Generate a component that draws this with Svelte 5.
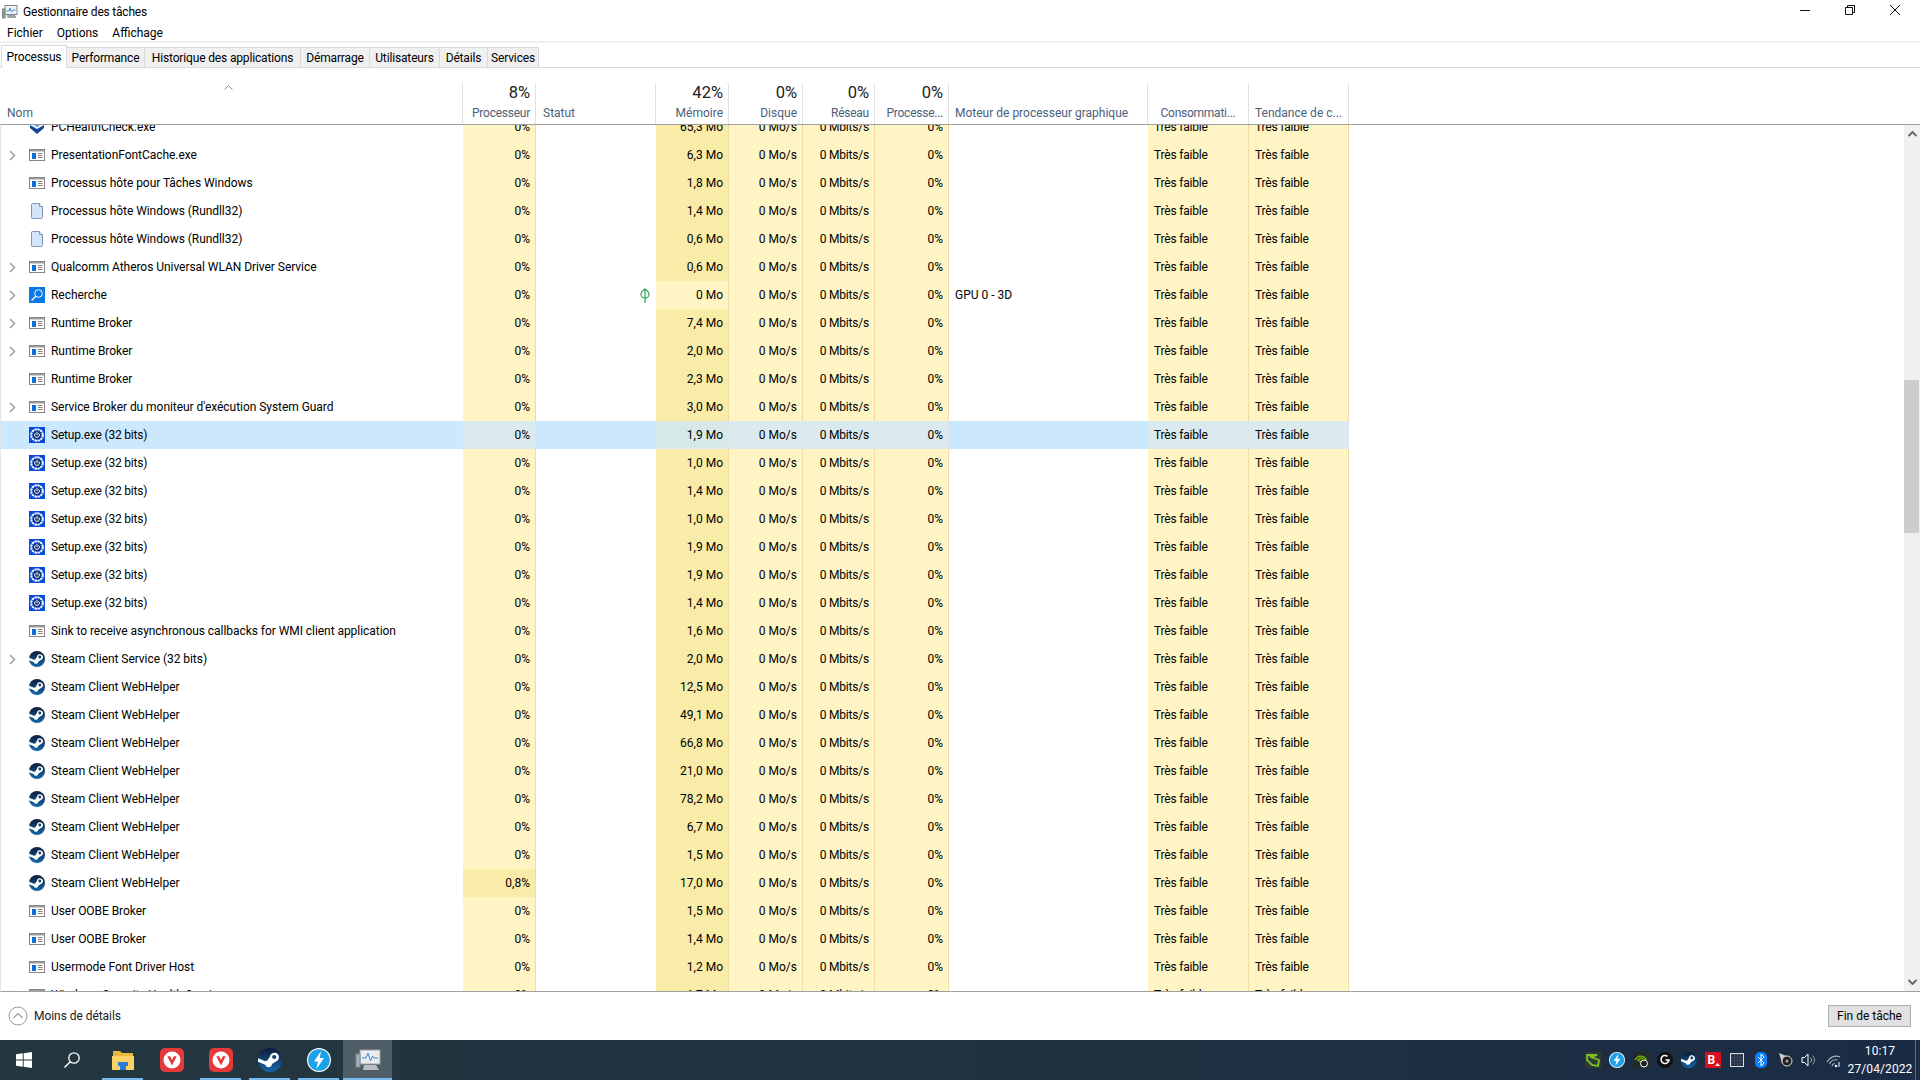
<script>
  const tabs = [
    { label: 'Processus', w: 66 },
    { label: 'Performance', w: 78 },
    { label: 'Historique des applications', w: 156 },
    { label: 'Démarrage', w: 69 },
    { label: 'Utilisateurs', w: 70 },
    { label: 'Détails', w: 48 },
    { label: 'Services', w: 51 },
  ]
  const menus = ['Fichier', 'Options', 'Affichage']

  const row = (name, mem, icon = 'win', exp = false, extra = {}) => ({ name, mem, icon, exp, cpu: '0%', ...extra })

  const rows = [
    row('PCHealthCheck.exe', '65,3 Mo', 'health'),
    row('PresentationFontCache.exe', '6,3 Mo', 'win', true),
    row('Processus hôte pour Tâches Windows', '1,8 Mo'),
    row('Processus hôte Windows (Rundll32)', '1,4 Mo', 'doc'),
    row('Processus hôte Windows (Rundll32)', '0,6 Mo', 'doc'),
    row('Qualcomm Atheros Universal WLAN Driver Service', '0,6 Mo', 'win', true),
    row('Recherche', '0 Mo', 'search', true, { gpu: 'GPU 0 - 3D', leaf: true, memLight: true }),
    row('Runtime Broker', '7,4 Mo', 'win', true),
    row('Runtime Broker', '2,0 Mo', 'win', true),
    row('Runtime Broker', '2,3 Mo'),
    row("Service Broker du moniteur d'exécution System Guard", '3,0 Mo', 'win', true),
    row('Setup.exe (32 bits)', '1,9 Mo', 'setup', false, { selected: true }),
    row('Setup.exe (32 bits)', '1,0 Mo', 'setup'),
    row('Setup.exe (32 bits)', '1,4 Mo', 'setup'),
    row('Setup.exe (32 bits)', '1,0 Mo', 'setup'),
    row('Setup.exe (32 bits)', '1,9 Mo', 'setup'),
    row('Setup.exe (32 bits)', '1,9 Mo', 'setup'),
    row('Setup.exe (32 bits)', '1,4 Mo', 'setup'),
    row('Sink to receive asynchronous callbacks for WMI client application', '1,6 Mo'),
    row('Steam Client Service (32 bits)', '2,0 Mo', 'steam', true),
    row('Steam Client WebHelper', '12,5 Mo', 'steam'),
    row('Steam Client WebHelper', '49,1 Mo', 'steam'),
    row('Steam Client WebHelper', '66,8 Mo', 'steam'),
    row('Steam Client WebHelper', '21,0 Mo', 'steam'),
    row('Steam Client WebHelper', '78,2 Mo', 'steam'),
    row('Steam Client WebHelper', '6,7 Mo', 'steam'),
    row('Steam Client WebHelper', '1,5 Mo', 'steam'),
    row('Steam Client WebHelper', '17,0 Mo', 'steam', false, { cpu: '0,8%', cpuHot: true }),
    row('User OOBE Broker', '1,5 Mo'),
    row('User OOBE Broker', '1,4 Mo'),
    row('Usermode Font Driver Host', '1,2 Mo'),
    row('Windows Security Health Service', '1,7 Mo', 'win', true),
  ]
</script>

{#snippet steamIcon(size)}
  <svg width={size} height={size} viewBox="0 0 16 16">
    <defs>
      <linearGradient id="steam-bg" x1="0" y1="0" x2="0" y2="1">
        <stop offset="0" stop-color="#0c1a3a" />
        <stop offset="1" stop-color="#1668a8" />
      </linearGradient>
    </defs>
    <circle cx="8" cy="8" r="8" fill="url(#steam-bg)" />
    <path d="M0 9.2 4.800 11.200A2.300 2.300 0 0 0 9.300 10.700L12 9A3 3 0 1 0 8 5.600L6.300 8.400A2.300 2.300 0 0 0 4.900 8.800L.1 6.800Z" fill="#fff" />
    <circle cx="10.800" cy="6" r="1.400" fill="#1a3a68" />
  </svg>
{/snippet}

{#snippet daemonIcon(size)}
  <svg width={size} height={size} viewBox="0 0 24 24">
    <circle cx="12" cy="12" r="12" fill="#fff" />
    <circle cx="12" cy="12" r="10.800" fill="#1ca0e8" />
    <path d="M14 3 7 13.500h4L9.500 21 17 10h-4.300Z" fill="#fff" />
  </svg>
{/snippet}

{#snippet vivaldiIcon()}
  <svg width="24" height="24" viewBox="0 0 24 24">
    <rect width="24" height="24" rx="5" fill="#e5383b" />
    <circle cx="12" cy="12" r="8.500" fill="#fff" />
    <path d="M7.300 8.300 12 17.500l4.700-9.200h-2.900L12 12 10.200 8.300Z" fill="#e5383b" />
  </svg>
{/snippet}

{#snippet rowIcon(kind)}
  {#if kind === 'win'}
    <svg width="16" height="16" viewBox="0 0 16 16">
      <rect x=".5" y="2.500" width="15" height="11" fill="#fff" stroke="#858585" />
      <rect x="1" y="3" width="14" height="1.500" fill="#a0a0a0" />
      <rect x="3" y="6" width="4" height="6" fill="#0a6fd6" />
      <path d="M9 6.500h4.500M9 8.500h4.500M9 10.500h4.500" stroke="#808080" />
    </svg>
  {:else if kind === 'doc'}
    <svg width="16" height="16" viewBox="0 0 16 16">
      <path d="M2.500 1.500Q2.500.5 3.500.5h7l3 3v11q0 1-1 1h-9q-1 0-1-1Z" fill="#d3e5f8" stroke="#7f96b8" />
      <path d="M10.500.5v3h3" fill="#f4f9ff" stroke="#7f96b8" />
    </svg>
  {:else if kind === 'setup'}
    <svg width="16" height="16" viewBox="0 0 16 16">
      <rect width="16" height="16" fill="#0a4ad8" />
      <circle cx="8" cy="8" r="5.800" fill="none" stroke="#f2f5ff" stroke-width="2" stroke-dasharray="2.400 .6" />
      <circle cx="8" cy="8" r="4" fill="#12306e" />
      <path d="M8 4.800v3.400M6.300 6.300A2.400 2.400 0 1 0 9.700 6.300" fill="none" stroke="#fff" />
    </svg>
  {:else if kind === 'steam'}
    {@render steamIcon(16)}
  {:else if kind === 'search'}
    <svg width="16" height="16" viewBox="0 0 16 16">
      <rect width="16" height="16" fill="#0a78e6" />
      <circle cx="9.500" cy="6.500" r="3.800" fill="none" stroke="#fff" />
      <path d="M6.800 9.200 2.600 13.400" stroke="#fff" stroke-width="1.400" />
    </svg>
  {:else if kind === 'health'}
    <svg width="16" height="16" viewBox="0 0 16 16">
      <path d="M8 0 15 4 8 8 1 4Z" fill="#5ea3e6" />
      <path d="M1 6 8 10 15 6 15 9 8 15 1 9Z" fill="#0f4a94" />
    </svg>
  {/if}
{/snippet}

<div class="window">
  <header class="title">
    <svg class="app-icon" width="16" height="16" viewBox="0 0 16 16">
      <rect x="3" y="1.500" width="12" height="9" fill="#eef3f8" stroke="#7d8790" />
      <path d="M4.500 7 7 7 8 4 9.500 8 11 6h2.500" fill="none" stroke="#3c8bd0" />
      <path d="M5 11h8l1.500 3h-9Z" fill="#9aa2a8" />
      <rect x=".5" y="5" width="2.500" height="9" fill="#7fae6a" stroke="#7d8790" />
    </svg>
    <span>Gestionnaire des tâches</span>
    <div class="caption">
      <svg width="10" height="10" viewBox="0 0 10 10"><path d="M0 5.500h10" stroke="#111" /></svg>
      <svg width="10" height="10" viewBox="0 0 10 10"><path d="M.5 2.500h7v7h-7ZM2.500 2.500v-2h7v7h-2" fill="none" stroke="#111" /></svg>
      <svg width="10" height="10" viewBox="0 0 10 10"><path d="M0 0 10 10M10 0 0 10" stroke="#111" /></svg>
    </div>
  </header>

  <nav class="menu">
    {#each menus as m}<span>{m}</span>{/each}
  </nav>

  <div class="tabs">
    {#each tabs as t, i}
      <div class="tab" class:active={i === 0} style="width: {t.w}px">{t.label}</div>
    {/each}
  </div>

  <div class="head">
    <div class="cell name">
      <svg class="sort" width="9" height="5" viewBox="0 0 9 5"><path d="M.5 4.500 4.500.7 8.500 4.500" fill="none" stroke="#8a8a8a" /></svg>
      <span class="label">Nom</span>
    </div>
    <div class="cell cpu r"><b>8%</b><span class="label tight">Processeur</span></div>
    <div class="cell status"><span class="label">Statut</span></div>
    <div class="cell mem r"><b>42%</b><span class="label">Mémoire</span></div>
    <div class="cell disk r"><b>0%</b><span class="label">Disque</span></div>
    <div class="cell net r"><b>0%</b><span class="label tight">Réseau</span></div>
    <div class="cell gpu r"><b>0%</b><span class="label tight">Processe...</span></div>
    <div class="cell engine"><span class="label">Moteur de processeur graphique</span></div>
    <div class="cell power center"><span class="label tight">Consommati...</span></div>
    <div class="cell trend center"><span class="label">Tendance de c...</span></div>
  </div>

  <div class="body">
    <div class="scroller">
      {#each rows as r}
        <div class="row" class:selected={r.selected}>
          <div class="cell name">
            <span class="chev">
              {#if r.exp}
                <svg width="7" height="11" viewBox="0 0 7 11"><path d="M1 1 5.500 5.500 1 10" fill="none" stroke="#a3a3a3" stroke-width="1.600" /></svg>
              {/if}
            </span>
            <span class="ico">{@render rowIcon(r.icon)}</span>
            <span class="txt" class:narrow={r.icon === 'setup'}>{r.name}</span>
          </div>
          <div class="cell cpu r heat" class:hot={r.cpuHot}>{r.cpu}</div>
          <div class="cell status">
            {#if r.leaf}
              <svg class="leaf" width="10" height="15" viewBox="0 0 10 15"><path d="M5 1C2 3 1 5 1 6.500 1 8.500 3 10 5 10S9 8.500 9 6.500C9 5 8 3 5 1ZM5 1V15" fill="none" stroke="#1d9a4a" stroke-width="1.100" /></svg>
            {/if}
          </div>
          <div class="cell mem r heat" class:hot={!r.memLight}>{r.mem}</div>
          <div class="cell disk r heat">0 Mo/s</div>
          <div class="cell net r heat">0 Mbits/s</div>
          <div class="cell gpu r heat">0%</div>
          <div class="cell engine">{r.gpu ?? ''}</div>
          <div class="cell power heat">Très faible</div>
          <div class="cell trend heat">Très faible</div>
        </div>
      {/each}
    </div>
    <div class="scrollbar">
      <svg width="9" height="6" viewBox="0 0 9 6"><path d="M.5 5 4.500 1 8.500 5" fill="none" stroke="#606060" stroke-width="1.800" /></svg>
      <div class="track"><div class="thumb"></div></div>
      <svg width="9" height="6" viewBox="0 0 9 6"><path d="M.5 1 4.500 5 8.500 1" fill="none" stroke="#606060" stroke-width="1.800" /></svg>
    </div>
  </div>

  <footer class="foot">
    <div class="less">
      <svg width="20" height="20" viewBox="0 0 20 20"><circle cx="10" cy="10" r="9" fill="none" stroke="#9a9a9a" /><path d="M5.500 12 10 7.500 14.500 12" fill="none" stroke="#9a9a9a" stroke-width="1.200" /></svg>
      <span>Moins de détails</span>
    </div>
    <button type="button">Fin de tâche</button>
  </footer>

  <div class="taskbar">
    <div class="tb start">
      <svg width="16" height="16" viewBox="0 0 16 16"><path d="M0 2.300 6.800 1.300V7.500H0ZM7.700 1.200 16 0V7.500H7.700ZM0 8.400H6.800V14.700L0 13.700ZM7.700 8.400H16V16L7.700 14.800Z" fill="#fff" /></svg>
    </div>
    <div class="tb find">
      <svg width="18" height="18" viewBox="0 0 18 18"><circle cx="11" cy="7" r="5.200" fill="none" stroke="#fff" stroke-width="1.300" /><path d="M7.200 10.800 1.500 16.500" stroke="#fff" stroke-width="1.500" /></svg>
    </div>
    <div class="tb on">
      <svg width="22" height="20" viewBox="0 0 22 20"><path d="M1 1h7l2 2h11v4H1Z" fill="#e9b93f" /><path d="M0 6h22v14H0Z" fill="#fad165" /><path d="M6 16V12h10v4h-2v4H8v-4Z" fill="#2b7bd1" /></svg>
    </div>
    <div class="tb">{@render vivaldiIcon()}</div>
    <div class="tb on">{@render vivaldiIcon()}</div>
    <div class="tb on">{@render steamIcon(24)}</div>
    <div class="tb on">{@render daemonIcon(24)}</div>
    <div class="tb on current">
      <svg width="26" height="24" viewBox="0 0 26 24"><rect x="5" y="2" width="20" height="14" fill="#e8ecef" stroke="#9aa1a6" /><path d="M7 10h4l2-5 2.500 8 2-5 1.500 2h4" fill="none" stroke="#3c8bd0" /><path d="M9 17h12l3 5H8Z" fill="#b9bec2" /><rect x="1" y="6" width="4" height="13" fill="#a9b0b5" stroke="#7d8790" /></svg>
    </div>

    <div class="tray">
      <svg width="16" height="16" viewBox="0 0 16 16"><rect width="16" height="16" fill="#2f3a35" /><path d="M2 3h10l-6 2 8 3-1 6-6-1-5-5Z" fill="none" stroke="#7dc21e" stroke-width="1.800" /></svg>
      {@render daemonIcon(16)}
      <svg width="16" height="16" viewBox="0 0 16 16"><rect width="16" height="16" fill="#232a2a" /><path d="M2 8C5 3 10 3 13 7 10 11 6 10 5 8 7 6 9 6 10 7" fill="none" stroke="#76b900" stroke-width="1.400" /><circle cx="11" cy="11.500" r="3.500" fill="#222" stroke="#fff" /></svg>
      <svg width="16" height="16" viewBox="0 0 16 16"><circle cx="8" cy="8" r="8" fill="#111" /><path d="M10.500 4.300A4 4 0 1 0 12 8H8.500" fill="none" stroke="#fff" stroke-width="1.600" /></svg>
      {@render steamIcon(16)}
      <svg width="16" height="16" viewBox="0 0 16 16"><rect width="16" height="16" rx="1" fill="#d4101c" /><text x="2.500" y="12" font-family="Roboto, sans-serif" font-weight="700" font-size="12" fill="#fff">B</text><path d="M10 14l2.500-3 2.500 3Z" fill="#fff" /></svg>
      <svg class="grid-ico" width="14" height="14" viewBox="0 0 14 14"><rect x=".5" y=".5" width="13" height="13" fill="#4a5460" stroke="#d8dde2" /><path d="M3 1v12M6 1v12M9 1v12M12 1v12M1 3h12M1 6h12M1 9h12M1 12h12" stroke="#1b2a44" /></svg>
      <svg class="bt-ico" width="12" height="16" viewBox="0 0 12 16"><rect width="12" height="16" rx="5" fill="#0a82ff" /><path d="M3 5l6 6-3 3V2l3 3-6 6" fill="none" stroke="#fff" /></svg>
      <svg width="16" height="16" viewBox="0 0 16 16"><path d="M2 1 12 5 12 13 5 11Z" fill="#ccc" /><circle cx="10" cy="9" r="5" fill="#222" stroke="#ddd" /><circle cx="10" cy="9" r="1.500" fill="#aaa" /></svg>
      <svg width="16" height="16" viewBox="0 0 16 16"><path d="M1 5.500h2.500L7 2v12L3.500 10.500H1Z" fill="none" stroke="#fff" /><path d="M9.500 5.500a3.500 3.500 0 0 1 0 5M11.500 3.500a6 6 0 0 1 0 9" fill="none" stroke="#9aa5b4" /></svg>
      <svg class="wifi" width="16" height="16" viewBox="0 0 16 16"><path d="M1 10A10 10 0 0 1 14 5M3.500 12A7 7 0 0 1 11.500 8M6 14A3.500 3.500 0 0 1 9 11.500" fill="none" stroke="#aab3be" stroke-width="1.200" /><circle cx="10" cy="14" r="1.200" fill="#fff" /><path d="M13 10v5" stroke="#fff" /></svg>
    </div>
    <div class="clock">
      <span>10:17</span>
      <span>27/04/2022</span>
    </div>
    <div class="peek"></div>
  </div>
</div>

<style>
  :global(body) {
    margin: 0;
    background: #fff;
  }

  .window {
    display: flex;
    flex-direction: column;
    width: 1920px;
    height: 1080px;
    overflow: hidden;
    font-family: Roboto, "Noto Sans", sans-serif;
    font-size: 12px;
    color: #000;
    background: #fff;
  }

  .title {
    display: flex;
    align-items: center;
    height: 23px;
    padding-left: 2px;
    flex: none;
    letter-spacing: -0.2px;
  }

  .app-icon {
    margin-right: 5px;
  }

  .caption {
    display: flex;
    gap: 35px;
    margin-left: auto;
    margin-top: -3px;
    padding-right: 20px;
  }

  .menu {
    display: flex;
    gap: 14px;
    height: 18px;
    padding: 1px 7px 0;
    box-sizing: border-box;
    align-items: center;
    flex: none;
  }

  .tabs {
    display: flex;
    align-items: flex-end;
    height: 24px;
    padding-left: 1px;
    flex: none;
    border-top: 2px solid #f0f0f0;
    border-bottom: 1px solid #d9d9d9;
    letter-spacing: -0.15px;
  }

  .tab {
    display: flex;
    align-items: center;
    justify-content: center;
    height: 20px;
    padding-top: 1px;
    background: #f0f0f0;
    border: 1px solid #d9d9d9;
    border-bottom: 0;
    border-left: 0;
    box-sizing: border-box;
  }

  .tab.active {
    height: 23px;
    margin-bottom: -1px;
    padding-top: 0;
    background: #fff;
    border-left: 1px solid #d9d9d9;
  }

  .head,
  .row {
    display: grid;
    grid-template-columns: 463px 73px 120px 73px 74px 72px 74px 199px 101px 100px;
    width: 1349px;
  }

  .row {
    grid-template-columns: 462px 73px 120px 73px 74px 72px 74px 199px 101px 100px;
    width: 1348px;
  }

  .head {
    height: 41px;
    margin-top: 15px;
    flex: none;
  }

  .head .cell {
    position: relative;
    display: flex;
    flex-direction: column;
    justify-content: flex-end;
    padding: 0 6px 4px;
    border-right: 1px solid #e0e0e0;
    box-sizing: border-box;
  }

  .head .name,
  .head .status {
    padding-left: 7px;
  }

  .head .label {
    color: #4c607a;
  }

  .head .tight {
    letter-spacing: -0.25px;
  }

  .head b {
    font-weight: 400;
    font-size: 16.5px;
    color: #222;
    line-height: 20px;
    margin-bottom: 3px;
  }

  .head .r {
    align-items: flex-end;
    padding-right: 5px;
  }

  .head .center {
    align-items: center;
  }

  .sort {
    position: absolute;
    left: 224px;
    top: 2px;
  }

  .body {
    display: flex;
    flex: 1;
    min-height: 0;
    position: relative;
    overflow: hidden;
    border-top: 1px solid #a0a0a0;
    border-bottom: 1px solid #a0a0a0;
    border-left: 1px solid #e6e6e6;
  }

  .scroller {
    flex: 1;
    margin-top: -12px;
  }

  .row {
    height: 28px;
    align-items: stretch;
  }

  .row .cell {
    display: flex;
    align-items: center;
    padding: 0 6px;
    box-sizing: border-box;
    white-space: nowrap;
  }

  .row .r {
    justify-content: flex-end;
    padding-right: 5px;
  }

  .row .name {
    padding: 0 0 0 8px;
  }

  .row .status {
    justify-content: flex-end;
    padding-right: 6px;
  }

  .row .net,
  .row .power,
  .row .trend {
    letter-spacing: -0.2px;
  }

  .row .power,
  .row .trend {
    padding-left: 6px;
  }

  .chev {
    display: flex;
    width: 7px;
    margin-right: 13px;
  }

  .ico {
    display: flex;
    margin-right: 6px;
  }

  .txt {
    letter-spacing: -0.05px;
  }

  .txt.narrow {
    letter-spacing: -0.2px;
  }

  .heat {
    background: #fff4c4;
    border-right: 1px solid #efdca5;
  }

  .heat.hot {
    background: #f9eca8;
  }

  .row.selected {
    background: #cce8ff;
  }

  .row.selected .heat {
    background: #dbeaee;
    border-color: #e2e6e6;
  }

  .row.selected .heat.hot {
    background: #d7e8e9;
  }

  .scrollbar {
    position: absolute;
    right: 0;
    top: 0;
    bottom: 0;
    width: 16px;
    background: #f0f0f0;
    display: flex;
    flex-direction: column;
    align-items: center;
    padding: 6px 0;
    box-sizing: border-box;
  }

  .track {
    flex: 1;
    width: 100%;
    padding-top: 243px;
  }

  .thumb {
    height: 153px;
    width: 15px;
    background: #cdcdcd;
  }

  .foot {
    display: flex;
    align-items: center;
    justify-content: space-between;
    height: 48px;
    flex: none;
    padding: 0 9px 0 8px;
  }

  .less {
    display: flex;
    align-items: center;
    gap: 6px;
    color: #1a1a1a;
    letter-spacing: -0.05px;
  }

  button {
    width: 83px;
    height: 22px;
    padding: 0;
    font: inherit;
    color: #000;
    background: #e1e1e1;
    border: 1px solid #adadad;
  }

  .taskbar {
    display: flex;
    align-items: center;
    height: 40px;
    flex: none;
    background: linear-gradient(90deg, #24363f 0%, #21333f 45%, #1a2b45 100%);
    color: #fff;
  }

  .tb {
    position: relative;
    display: flex;
    align-items: center;
    justify-content: center;
    width: 49px;
    height: 40px;
    box-sizing: border-box;
  }

  .tb.start {
    width: 48px;
  }

  .tb.find {
    width: 48px;
    margin-right: 2px;
  }

  .tb.on::after {
    content: '';
    position: absolute;
    left: 4px;
    right: 4px;
    bottom: 0;
    height: 2px;
    background: #76b9ed;
  }

  .tb.current {
    background: #4f5e66;
  }

  .tb.current::after {
    left: 0;
    right: 0;
  }

  .tray {
    display: flex;
    align-items: center;
    gap: 8px;
    margin-left: auto;
    margin-right: 5px;
  }

  .grid-ico {
    margin: 0 1px;
  }

  .bt-ico {
    margin: 0 2px;
  }

  .wifi {
    margin-left: 1px;
  }

  .clock {
    display: flex;
    flex-direction: column;
    align-items: center;
    line-height: 18px;
    width: 66px;
    letter-spacing: 0.1px;
  }

  .peek {
    width: 5px;
    height: 40px;
    margin-left: 2px;
    border-left: 1px solid #5a6a7a;
    box-sizing: border-box;
  }
</style>
